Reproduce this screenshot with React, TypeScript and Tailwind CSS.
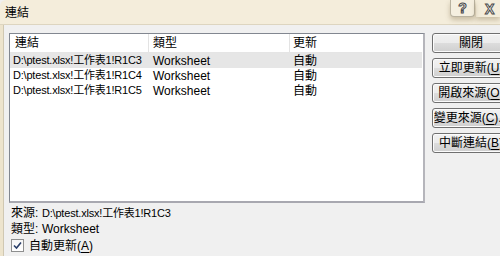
import React from "react";

const font = { fontFamily: '"Liberation Sans", "Noto Sans CJK TC", sans-serif' };

const links = [
  { name: "D:\\ptest.xlsx!工作表1!R1C3", type: "Worksheet", update: "自動" },
  { name: "D:\\ptest.xlsx!工作表1!R1C4", type: "Worksheet", update: "自動" },
  { name: "D:\\ptest.xlsx!工作表1!R1C5", type: "Worksheet", update: "自動" },
];

const Mn = ({ k }: { k: string }) => (
  <>
    (<span className="underline underline-offset-2">{k}</span>)
  </>
);

const buttons: { label: string; key?: string; tail?: string }[] = [
  { label: "關閉" },
  { label: "立即更新", key: "U" },
  { label: "開啟來源", key: "O" },
  { label: "變更來源", key: "C", tail: "..." },
  { label: "中斷連結", key: "B" },
];

const WinButton = ({ label, k, tail }: { label: string; k?: string; tail?: string }) => (
  <div className="w-[78px] h-[20px] shrink-0 rounded-[3px] border border-[#707070] bg-[linear-gradient(#f2f2f2_0%,#ebebeb_50%,#dddddd_50%,#cfcfcf_100%)] flex items-center justify-center text-[12px] leading-none text-black whitespace-nowrap shadow-[inset_0_0_0_1px_#fcfcfc]">
    {label}
    {k && <Mn k={k} />}
    {tail}
  </div>
);

export default function App() {
  return (
    <div className="w-[500px] h-[256px] overflow-hidden bg-[#f0f0f0] flex flex-col text-black" style={font}>
      <div className="h-[25px] shrink-0 bg-[#f4eddb] flex items-start justify-between rounded-tl-[6px] border-b border-[#ddd5c0]">
        <span className="text-[12px] leading-none pl-[5px] pt-[7px]">連結</span>
        <div className="flex items-start">
          <div className="w-[25px] h-[17px] border border-t-0 border-[#b9b2a0] rounded-b-[4px] bg-[#f5efe0] flex items-center justify-center shadow-[0_3px_5px_rgba(120,100,60,0.35)]">
            <span className="text-[14px] font-bold leading-none text-white [-webkit-text-stroke:1px_#4a4a4a]">?</span>
          </div>
          <div className="w-[24px] h-[17px] ml-[1px] flex items-center justify-start pl-[9px] shadow-[0_3px_5px_rgba(120,100,60,0.35)]">
            <span className="text-[14px] font-bold leading-none text-white [-webkit-text-stroke:1px_#4a4a4a]">X</span>
          </div>
        </div>
      </div>
      <div className="flex flex-1 min-h-0">
        <div className="w-[4px] shrink-0 bg-[#ede4cd] border-r border-[#d0c8b2]" />
        <div className="flex flex-1 pl-[5px] pt-[8px] gap-[7px]">
          <div className="flex flex-col w-[416px] shrink-0">
            <div className="h-[170px] border border-[#828790] border-r-2 border-r-[#b5b5bb] border-b-2 border-b-[#a8a8b0] bg-white flex flex-col">
              <div className="h-[19px] flex text-[12px] border-b border-[#e5e5e5] w-[412px]">
                <div className="w-[139px] pl-[5px] flex items-center border-r border-[#e3e3e3]">連結</div>
                <div className="w-[141px] pl-[4px] flex items-center border-r border-[#e3e3e3]">類型</div>
                <div className="flex-1 pl-[3px] flex items-center">更新</div>
              </div>
              {links.map((l, i) => (
                <div
                  key={l.name}
                  className={`h-[15px] flex items-center text-[12px] whitespace-nowrap w-[412px] ${i === 0 ? "bg-[#e6e6e6]" : ""}`}
                >
                  <div className="w-[139px] pl-[3px] text-[11px] tracking-[-0.2px]">{l.name}</div>
                  <div className="w-[141px] pl-[4px]">{l.type}</div>
                  <div className="flex-1 pl-[3px]">{l.update}</div>
                </div>
              ))}
            </div>
            <div className="flex flex-col pl-[2px] text-[12px]">
              <div className="h-[16px] mt-[2px] flex items-center">
                <span className="w-[31px]">來源:</span>
                <span className="text-[11px] tracking-[-0.2px]">D:\ptest.xlsx!工作表1!R1C3</span>
              </div>
              <div className="h-[16px] flex items-center">
                <span className="w-[31px]">類型:</span>
                <span>Worksheet</span>
              </div>
              <div className="h-[17px] flex items-center gap-[5px]">
                <div className="w-[13px] h-[13px] border border-[#8e8f8f] bg-[linear-gradient(#f6f6f6,#ffffff)] flex items-center justify-center">
                  <svg width="9" height="9" viewBox="0 0 9 9">
                    <path d="M1 4.5 L3.5 7 L8 1.5" fill="none" stroke="#2a3f6a" strokeWidth="1.6" />
                  </svg>
                </div>
                <span>
                  自動更新
                  <Mn k="A" />
                </span>
              </div>
            </div>
          </div>
          <div className="flex flex-col gap-[5px]">
            {buttons.map(b => (
              <WinButton key={b.label} label={b.label} k={b.key} tail={b.tail} />
            ))}
          </div>
        </div>
      </div>
    </div>
  );
}
